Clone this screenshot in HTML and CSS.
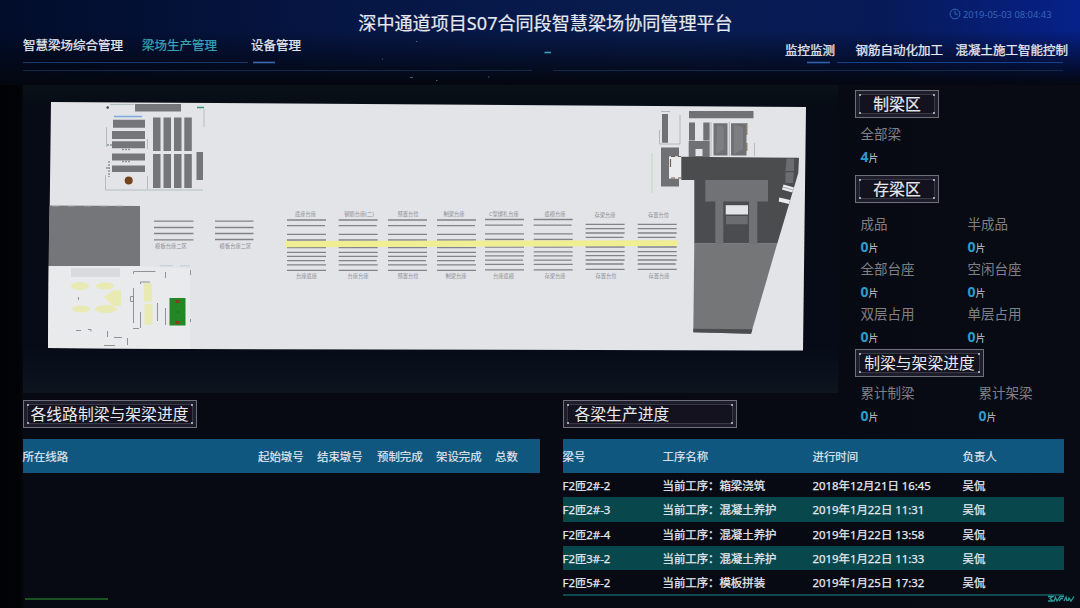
FILE: index.html
```html
<!DOCTYPE html>
<html lang="zh-CN">
<head>
<meta charset="utf-8">
<title>智慧梁场协同管理平台</title>
<link rel="stylesheet" href="styles.css">
</head>
<body>
<div class="app">
  <header class="header">
    <svg class="header-lines" width="1080" height="85" viewBox="0 0 1080 85" fill="none">
      <path d="M23 62.5H248" stroke="#17386b"/>
      <path d="M253 62.5H275" stroke="#3f69ad" stroke-width="1.6"/>
      <path d="M23 70.5H532M553 70.5H1063" stroke="#12294a"/>
      <path d="M807 62.5H830" stroke="#2f62a8" stroke-width="1.6"/>
      <path d="M837 62.5H1063" stroke="#15408a"/>
      <path d="M544.5 52.5H551" stroke="#3fa0b8" stroke-width="1.6"/>
      <path d="M416 41.5h1.5M410 77.500h3M436 80.500h1.500M488 77h1.500M382 59h1" stroke="#3d6285"/>
    </svg>
    <nav class="nav nav-left">
      <a class="nav-item">智慧梁场综合管理</a>
      <a class="nav-item is-active">梁场生产管理</a>
      <a class="nav-item nav-device">设备管理</a>
    </nav>
    <h1 class="title">深中通道项目S07合同段智慧梁场协同管理平台</h1>
    <div class="header-right">
      <div class="clock">
        <svg width="12" height="12" viewBox="0 0 12 12" fill="none" stroke="currentColor"><circle cx="6" cy="6" r="4.900"/><path d="M6 2.800V6.300H8.600"/></svg>
        <span>2019-05-03 08:04:43</span>
      </div>
      <nav class="nav nav-right">
        <a class="nav-item">监控监测</a>
        <a class="nav-item nav-rebar">钢筋自动化加工</a>
        <a class="nav-item nav-concrete">混凝土施工智能控制</a>
      </nav>
    </div>
  </header>

  <div class="upper">
    <section class="map">
      <svg width="815" height="308" viewBox="23 85 815 308">
        <defs>
          <g id="bed">
            <path d="M0 220H39M0 225.700H38M0 234.300H39M0 240H39M0 247.700H39M0 252.400H39M0 256.400H39M0 260.700H38M0 264.800H39M0 270.400H39"/>
          </g>
          <g id="bed-short">
            <path d="M0 224.400H39M0 228.700H39M0 233H39M0 237.400H38M0 247H39M0 251.700H39M0 255.700H39M0 260H39M0 264H38M0 269.400H39"/>
          </g>
        </defs>
        <path d="M51 102L806 107L803 350.500L190 349L48 348Z" fill="#e3e4e8"/>
        <path d="M48.500 266H140L190 269V349L48 348Z" fill="#e9eaec"/>

        <g fill="#757679">
          <path d="M135 104h46v7.500h-46zM113 119.700h32v8h-32zM112 131h33v8h-33zM112 141.300h33v7h-33zM112 153.500h33v7h-33zM112 165.500h33v6.500h-33z"/>
          <path d="M153 117.500h7.500v33.500h-7.500zM163.500 117.500h7.500v33.500h-7.500zM174 117.500h7.500v33.500h-7.500zM184.300 117.500h7.500v33.500h-7.500z"/>
          <path d="M153 154h7.500v34h-7.500zM163.500 154h7.500v34h-7.500zM174 154h7.500v34h-7.500zM184.300 154h7.500v34h-7.500zM196.500 152h6.500v28h-6.500z"/>
          <path d="M49.500 205.500L140 206V266H48.500Z"/>
        </g>
        <path d="M114 116.500H142" stroke="#7da9dd" stroke-width="1.500"/>
        <path d="M197 107.500H204" stroke="#3b9272" stroke-width="1.500"/>
        <circle cx="107.700" cy="107.500" r="1.300" fill="#3b4552"/>
        <circle cx="128.700" cy="180.400" r="4" fill="#754319"/>
        <path d="M106.500 127V147M105.500 175V190H203M147.500 139V149M147.500 176V189M204 109V127M110 104.500H134" stroke="#a6b3b8" fill="none" stroke-width=".8"/>
        <path d="M107 145h5M109 161v16M106 168h4M122 149.500h8M122 161.500h8" stroke="#8d9398" stroke-width="1.400" stroke-dasharray="2 1"/>
        <path d="M52 205.800H132" stroke="#bfc0c3" stroke-width="1" stroke-dasharray="7 9"/>

        <rect x="71" y="268" width="49" height="9" fill="#d9dadd"/>
        <g fill="#e8e9b3">
          <ellipse cx="80" cy="286" rx="9" ry="4"/><ellipse cx="81" cy="309" rx="9" ry="3.500"/>
          <ellipse cx="105" cy="286" rx="9" ry="3.500"/><ellipse cx="106" cy="309" rx="11" ry="4"/>
          <path d="M104 297L114 290H121V306H113Z"/>
          <rect x="144" y="283" width="8" height="19" rx="2"/><rect x="144.500" y="304" width="8" height="21" rx="2"/>
        </g>
        <path d="M133.500 274V271.500H155.500M165.500 272V278M140.500 284V282H150M133.500 288V323M140.500 312V328M157.500 303V321M165.500 308V325M130.500 296.500h3v5h-3zM78.500 297v3M76 330.500h5M88 329.500h3v2M107.500 331v6M114 337.500h8M127.500 338v7M104 345.500h11M133 328.500h6M190.500 270v5M190.500 319v3" stroke="#85898d" fill="none" stroke-width=".9"/>
        <path d="M160 265.800H173M180 265.800H190" stroke="#bccbd7" stroke-width="1"/>
        <rect x="169.500" y="298" width="16" height="27.500" fill="#248726"/>
        <path d="M175.500 300h4v3h-4zM175.500 321h4v3h-4z" fill="#8b3b1f"/>
        <path d="M177 312h2" stroke="#176519"/>

        <g stroke="#828388" stroke-width="1.300">
          <path d="M154 221.200H193.500M154 227.500H193.500M154 233.500H193.500M154 239.800H193.500M215 221.200H253.500M215 227.500H253.500M215 233.500H253.500M215 239.500H253.500"/>
          <use href="#bed" x="287"/><use href="#bed" x="338.700"/><use href="#bed" x="388"/><use href="#bed" x="437"/>
          <use href="#bed" x="485" y="-.5"/><use href="#bed" x="533.700" y="-.5"/>
          <use href="#bed-short" x="585.600"/><use href="#bed-short" x="637.700"/>
        </g>
        <path d="M286 241L677.500 240.300V246L286 247.200Z" fill="#f0ee93"/>
        <g class="plan-label">
          <text x="171" y="248">模板台座二区</text><text x="235.500" y="248">模板台座二区</text>
          <text x="305.500" y="216">底座台座</text><text x="359" y="216">钢筋台座(二)</text><text x="408" y="216">预置台位</text><text x="454" y="216">制梁台座</text>
          <text x="504" y="215.500">C型绑扎台座</text><text x="555" y="215.500">底模台座</text><text x="605" y="216.500">存梁台座</text><text x="658.500" y="216.500">存置台位</text>
          <text x="306.500" y="278">台座底座</text><text x="358" y="278">台座台座</text><text x="408" y="278">预置台位</text><text x="456" y="278">制梁台座</text>
          <text x="503.500" y="278">台座底模</text><text x="555" y="278">存梁台座</text><text x="606" y="278">存置台位</text><text x="659" y="278">存置台座</text>
        </g>

        <path d="M652 153V193" stroke="#bcdcb9"/>
        <g fill="#707174">
          <path d="M662 114h6v28.700h-6zM661 147.500h18v9h-10v22h10v8h-18zM689 111h64.500v7.300H689zM689 122.500h6v18h-6zM703.300 122.500h6.300v18h-6.300zM713.500 123.300H727.500V155.500H713.500zM731 123.300H746.500V155.500H731z"/>
          <path fill-rule="evenodd" d="M688.700 141H709.700V157H688.700zM695.500 149V156H702.500V149z"/>
        </g>
        <path d="M669.500 156.500H681V178.500H669.500z" fill="#ecebeb"/>
        <path d="M671 156.500h4M678 156.500h3M671 178h4M678 178h3M670.500 159v8" stroke="#745f48" stroke-width="1.200"/>
        <path d="M717 125L724 127V149L716 154ZM734 125L743 127V149L734 154Z" fill="#7d7e81"/>
        <path d="M746.800 123v12M746.800 143v8" stroke="#8b795e" stroke-width="1.300"/>
        <path d="M659.500 130V144H680V115M661 111.500h9M711 122v34M729.300 122v34M754.500 143v13" stroke="#a8abae" fill="none" stroke-width=".8"/>
        <path d="M681.300 156.800L799 157.700L798.300 173L777.300 243.500H694.300V180H681.300Z" fill="#4b4c4e"/>
        <path d="M694.300 243.300H777.300L751 333.700L693.300 332.300Z" fill="#757678"/>
        <path d="M693.300 328.700L752.500 329.300L751 333.700L693.300 332.300Z" fill="#4b4c4e"/>
        <path d="M705.300 180H768V201.500H757.300V244H749V201.500H723.300V244H715.300V201.500H705.300Z" fill="#717275"/>
        <path d="M725.700 205.200H748V214.500H725.700z" fill="#e4e4e7"/>
        <path d="M726 216h21.700v8.200H726zM786.500 158.400h7.500v12.700h-8.500zM785.500 172.200h8.300l-.8 10.800h-7.500z" fill="#6c6d70"/>
        <path d="M783.500 184.500L794 187.500L792.300 192.500L782 189.500ZM779.300 197.500L790 200L789 204L778.700 201.500Z" fill="#ecedef"/>
        <path d="M783 187L793 190" stroke="#85868a" stroke-width=".7"/>
      </svg>
    </section>

    <aside class="stats">
      <h2 class="badge">制梁区</h2>
      <div class="stat-grid single">
        <div class="stat"><span class="stat-label">全部梁</span><span class="stat-value"><b>4</b>片</span></div>
      </div>
      <h2 class="badge">存梁区</h2>
      <div class="stat-grid storage">
        <div class="stat"><span class="stat-label">成品</span><span class="stat-value"><b>0</b>片</span></div>
        <div class="stat"><span class="stat-label">半成品</span><span class="stat-value"><b>0</b>片</span></div>
        <div class="stat"><span class="stat-label">全部台座</span><span class="stat-value"><b>0</b>片</span></div>
        <div class="stat"><span class="stat-label">空闲台座</span><span class="stat-value"><b>0</b>片</span></div>
        <div class="stat"><span class="stat-label">双层占用</span><span class="stat-value"><b>0</b>片</span></div>
        <div class="stat"><span class="stat-label">单层占用</span><span class="stat-value"><b>0</b>片</span></div>
      </div>
      <h2 class="badge badge-mid">制梁与架梁进度</h2>
      <div class="stat-grid progress">
        <div class="stat"><span class="stat-label">累计制梁</span><span class="stat-value"><b>0</b>片</span></div>
        <div class="stat"><span class="stat-label">累计架梁</span><span class="stat-value"><b>0</b>片</span></div>
      </div>
    </aside>
  </div>

  <div class="lower">
    <section class="panel">
      <h2 class="badge badge-wide badge-line">各线路制梁与架梁进度</h2>
      <div class="row head line-cols"><span>所在线路</span><span>起始墩号</span><span>结束墩号</span><span>预制完成</span><span>架设完成</span><span>总数</span></div>
      <div class="scroll-thumb"></div>
    </section>
    <section class="panel">
      <h2 class="badge badge-wide">各梁生产进度</h2>
      <div class="row head beam-cols"><span>梁号</span><span>工序名称</span><span>进行时间</span><span>负责人</span></div>
      <div class="rows">
        <div class="row beam-cols"><span>F2匝2#-2</span><span>当前工序：箱梁浇筑</span><span>2018年12月21日 16:45</span><span>吴侃</span></div>
        <div class="row beam-cols"><span>F2匝2#-3</span><span>当前工序：混凝土养护</span><span>2019年1月22日 11:31</span><span>吴侃</span></div>
        <div class="row beam-cols"><span>F2匝2#-4</span><span>当前工序：混凝土养护</span><span>2019年1月22日 13:58</span><span>吴侃</span></div>
        <div class="row beam-cols"><span>F2匝3#-2</span><span>当前工序：混凝土养护</span><span>2019年1月22日 11:33</span><span>吴侃</span></div>
        <div class="row beam-cols"><span>F2匝5#-2</span><span>当前工序：模板拼装</span><span>2019年1月25日 17:32</span><span>吴侃</span></div>
      </div>
    </section>
  </div>
  <svg class="mark" width="28" height="8" viewBox="0 0 28 8" fill="none" stroke="#2a9c9c" stroke-width="1.300"><path d="M1 1.500H6L3 3.500L6 6H1M7 6L8.500 2.500L10 6L13 1.500H17M12 6L14 3.500H16M17 6L19 2L20 6M21 6L22 3L24 6L27 1.500"/></svg>
</div>
</body>
</html>
```

FILE: styles.css
```css
* { box-sizing: border-box; }
body {
  margin: 0;
  background: #020308;
  color: #e6e9f0;
  font-family: "Noto Sans", "Noto Sans CJK SC", sans-serif;
}
h1, h2 { margin: 0; font-weight: 400; }
.app {
  position: relative;
  width: 1080px;
  height: 608px;
  overflow: hidden;
  background: linear-gradient(90deg, #020205 0, #020306 20px, #070a12 24px, #080a14 100%);
}

/* header */
.header {
  position: relative;
  display: grid;
  grid-template-columns: 335px 421px 324px;
  height: 85px;
  background:
    linear-gradient(180deg, rgba(3, 6, 16, 0) 35%, rgba(3, 6, 14, .6) 75%, #04070f 100%),
    linear-gradient(90deg, #020d2b 0, #061645 33%, #081c4e 60%, #071a58 82%, #06218a 100%);
}
.header-lines { position: absolute; left: 0; top: 0; }
.nav { display: flex; font-size: 12.5px; line-height: 18px; white-space: nowrap; }
.nav-item { -webkit-text-stroke: .25px currentColor; }
.nav-left { padding: 37px 0 0 23px; gap: 19px; }
.is-active { color: #36a2b8; }
.nav-device { margin-left: 15px; }
.title {
  padding-top: 10px;
  text-align: center;
  font-size: 18.1px;
  line-height: 27px;
  white-space: nowrap;
  -webkit-text-stroke: .2px currentColor;
}
.header-right { padding-left: 29px; }
.clock {
  display: flex;
  align-items: center;
  gap: 2px;
  height: 28px;
  padding-left: 164px;
  color: #3566b8;
  font-size: 9.4px;
  white-space: nowrap;
}
.nav-right { padding-top: 14px; }
.nav-rebar { margin-left: 20.5px; }
.nav-concrete { margin-left: 12.5px; }

/* upper area */
.upper { display: flex; height: 315px; }
.map {
  width: 815px;
  height: 308px;
  margin-left: 23px;
  background: linear-gradient(180deg, #0a1118 0, #060b15 8%, #060b17 85%, #0d151f 100%);
}
.map svg { display: block; }
.plan-label {
  fill: #8b8c90;
  font-size: 5.300px;
  text-anchor: middle;
}
.stats { padding: 5px 0 0 17px; }
.badge {
  width: 84px;
  height: 28px;
  border: 1px solid #6f707c;
  background:
    linear-gradient(#a3a5b0, #a3a5b0) 3px 3px / 2px 2px no-repeat,
    linear-gradient(#a3a5b0, #a3a5b0) calc(100% - 3px) 3px / 2px 2px no-repeat,
    linear-gradient(#a3a5b0, #a3a5b0) 3px calc(100% - 3px) / 2px 2px no-repeat,
    linear-gradient(#a3a5b0, #a3a5b0) calc(100% - 3px) calc(100% - 3px) / 2px 2px no-repeat,
    linear-gradient(#15121f, #15121f) center / calc(100% - 8px) calc(100% - 8px) no-repeat,
    linear-gradient(#393844, #393844) center / calc(100% - 6px) calc(100% - 6px) no-repeat,
    #1e1d2b;
  font-size: 15.800px;
  line-height: 27px;
  text-align: center;
  white-space: nowrap;
}
.stats .badge { -webkit-text-stroke: .2px currentColor; }
.stats .badge-mid { width: 129px; -webkit-text-stroke: 0; }
.badge-wide { width: 174px; padding-left: 11px; text-align: left; }
.badge-line { padding-left: 7px; }
.stat-grid { display: grid; padding-left: 5.5px; white-space: nowrap; }
.single { height: 57px; padding-top: 5px; }
.storage { grid-template-columns: 107px 107px; grid-auto-rows: 45px; height: 146px; padding-top: 10px; }
.progress { grid-template-columns: 118px 90px; padding-top: 5px; }
.stat { display: flex; flex-direction: column; }
.stat-label { color: #7f8087; font-size: 13.500px; line-height: 22px; }
.stat-value { color: #c9ccd3; font-size: 10px; line-height: 23px; }
.stat-value b { color: #2c9ccc; font-size: 14px; }

/* tables */
.lower { display: flex; gap: 22.5px; padding-left: 22.5px; }
.panel:first-child { width: 517.5px; }
.panel:last-child { width: 501px; }
.row {
  display: grid;
  align-items: center;
  height: 24.250px;
  font-size: 11.400px;
  white-space: nowrap;
}
.head { height: 34px; margin-top: 11px; background: #10577f; -webkit-text-stroke: .15px currentColor; }
.line-cols { grid-template-columns: 235.500px 59px 60px 59px 59px 1fr; }
.beam-cols { grid-template-columns: 100px 150px 150px 1fr; }
.rows { border-bottom: 2px solid #0c4a50; }
.rows .row { -webkit-text-stroke: .25px currentColor; }
.rows .row:nth-child(even) { background: #08474c; }
.scroll-thumb { width: 83px; height: 2px; margin: 125px 0 0 2px; background: #1c5222; }
.mark { position: absolute; left: 1047px; top: 595px; }
```
